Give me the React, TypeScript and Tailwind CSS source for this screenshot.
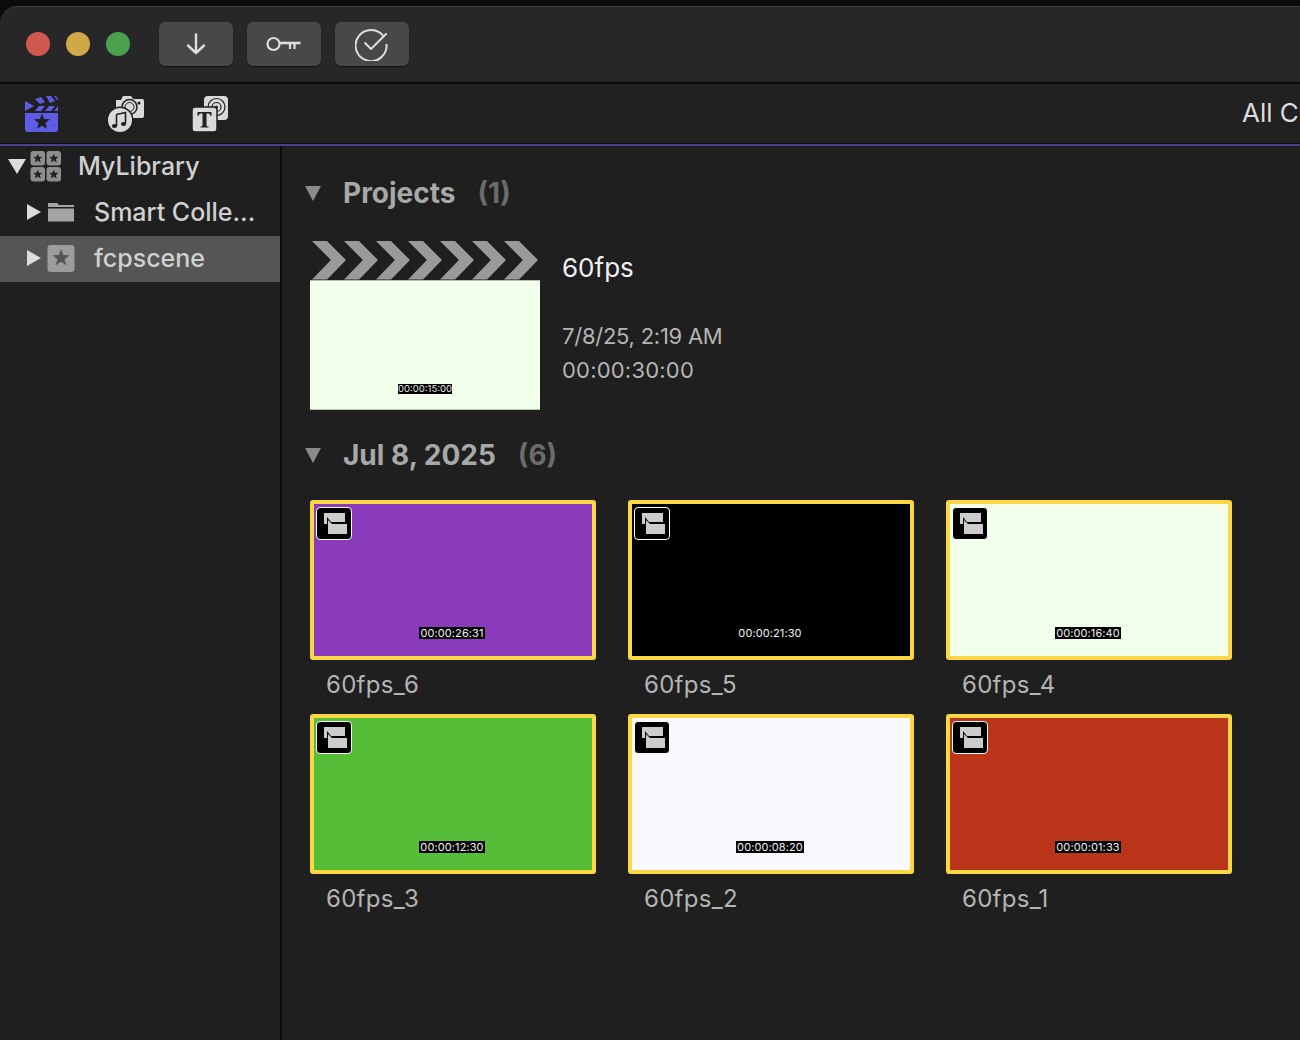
import React from 'react';

const font = { fontFamily: 'Inter, "Liberation Sans", sans-serif' };

const clips = [
  { name: '60fps_6', color: 'bg-[#8a3bbb]', time: '00:00:26:31' },
  { name: '60fps_5', color: 'bg-black', time: '00:00:21:30' },
  { name: '60fps_4', color: 'bg-[#f2ffea]', time: '00:00:16:40' },
  { name: '60fps_3', color: 'bg-[#55bd37]', time: '00:00:12:30' },
  { name: '60fps_2', color: 'bg-[#f9faff]', time: '00:00:08:20' },
  { name: '60fps_1', color: 'bg-[#bb351a]', time: '00:00:01:33' },
];

const TriRight = () => (
  <svg width="16" height="18" viewBox="0 0 16 18" className="shrink-0"><path d="M1 1 L15 9 L1 17 Z" fill="#dcdcdc" /></svg>
);

const TriDown = ({ w = 18, h = 15, c = '#dcdcdc' }: { w?: number; h?: number; c?: string }) => (
  <svg width={w} height={h} viewBox="0 0 18 15" preserveAspectRatio="none" className="shrink-0"><path d="M0 0 H18 L9 15 Z" fill={c} /></svg>
);

const Star = ({ cx, cy, r, fill }: { cx: number; cy: number; r: number; fill: string }) => {
  const pts: string[] = [];
  for (let i = 0; i < 10; i++) {
    const rad = i % 2 === 0 ? r : r * 0.42;
    const a = -Math.PI / 2 + (i * Math.PI) / 5;
    pts.push(`${cx + rad * Math.cos(a)},${cy + rad * Math.sin(a)}`);
  }
  return <polygon points={pts.join(' ')} fill={fill} />;
};

const ClapIcon = () => (
  <svg width="34" height="36" viewBox="0 0 34 36">
    <path d="M0 17 H33 V33 a3 3 0 0 1 -3 3 H3 a3 3 0 0 1 -3 -3 Z" fill="#5e5ce6" />
    <path d="M0 5 L9 10 L0 15 Z" fill="#5e5ce6" />
    <path d="M10 15 L14 10 H20 L16 15 Z M20 15 L24 10 H30 L26 15 Z M29 15 L33 10 V15 Z" fill="#5e5ce6" />
    <path d="M10 3 L16 1 L20 6 L15 8 Z M21 0 L26 0 L30 5 L25 7 Z M29 0 H31 L33 3 V5 Z" fill="#5e5ce6" />
    <Star cx={17} cy={26} r={8.500} fill="#1f1f1f" />
  </svg>
);

const MusicPhotoIcon = () => (
  <svg width="37" height="36" viewBox="0 0 37 36">
    <path d="M8 4 H13 L15 0 H23 L25 3 H34 a2 2 0 0 1 2 2 V20 a2 2 0 0 1 -2 2 H8 Z" fill="#dadada" />
    <circle cx="31" cy="7" r="1.500" fill="#1f1f1f" />
    <circle cx="21.500" cy="11" r="7.500" fill="#dadada" stroke="#1f1f1f" strokeWidth="1.500" />
    <circle cx="21.500" cy="11" r="4.500" fill="none" stroke="#1f1f1f" strokeWidth="1" />
    <circle cx="12" cy="24" r="13.500" fill="#1f1f1f" />
    <circle cx="12" cy="24" r="12" fill="#dadada" />
    <path d="M8.500 18.500 L17.500 16.500 V27.500" fill="none" stroke="#1f1f1f" strokeWidth="1.600" />
    <path d="M8.500 18.500 V30" fill="none" stroke="#1f1f1f" strokeWidth="1.600" />
    <ellipse cx="6.500" cy="30" rx="2.600" ry="2" fill="#1f1f1f" />
    <ellipse cx="15.500" cy="28" rx="2.600" ry="2" fill="#1f1f1f" />
  </svg>
);

const TitleIcon = () => (
  <svg width="38" height="36" viewBox="0 0 38 36">
    <rect x="12" y="0" width="24" height="24" rx="4" fill="#dadada" />
    <circle cx="24.500" cy="11" r="8.500" fill="none" stroke="#1f1f1f" strokeWidth="1.200" />
    <circle cx="24.500" cy="11" r="4.500" fill="none" stroke="#1f1f1f" strokeWidth="1.200" />
    <circle cx="24.500" cy="11" r="1.500" fill="#1f1f1f" />
    <rect x="0" y="11" width="25" height="25" rx="3" fill="#dadada" stroke="#1f1f1f" strokeWidth="1.500" />
    <path d="M5.500 16 H19.500 V20 H18.500 C18.100 18 17.500 17.600 14.500 17.600 V29 C14.500 30.200 15.100 30.500 16.500 30.500 V31.500 H8.500 V30.500 C9.900 30.500 10.500 30.200 10.500 29 V17.600 C7.500 17.600 6.900 18 6.500 20 H5.500 Z" fill="#222" />
  </svg>
);

const LibraryIcon = () => (
  <svg width="32" height="32" viewBox="0 0 32 32">
    {[[0, 1], [16, 1], [0, 17], [16, 17]].map(([x, y]) => (
      <g key={`${x}-${y}`}>
        <rect x={x + 0.5} y={y} width="14.500" height="14.500" rx="3" fill="#8e8e8e" />
        <Star cx={x + 7.8} cy={y + 7.4} r={5} fill="#1f1f1f" />
      </g>
    ))}
  </svg>
);

const FolderIcon = () => (
  <svg width="28" height="20" viewBox="0 0 28 20"><path d="M1 1 H10 L12 3 H27 V5 H1 Z M1 6.500 H27 V19.500 H1 Z" fill="#a5a5a5" /></svg>
);

const EventIcon = () => (
  <svg width="28" height="28" viewBox="0 0 28 28">
    <rect x="0.500" y="1" width="27" height="27" rx="3" fill="#9c9c9c" />
    <Star cx={14} cy={14} r={9} fill="#555" />
  </svg>
);

const ClipBadge = () => (
  <div className="absolute left-[2px] top-[3px] flex h-[33px] w-[36px] items-center justify-center rounded-[4px] border border-white bg-black">
    <svg width="26" height="23" viewBox="0 0 26 23">
      <path d="M3 1 H24 V10 H10 L6 5 V12 H3 Z M7 8 L11 12 H26 V22 H7 Z" fill="#cccccc" />
    </svg>
  </div>
);

const Timecode = ({ time }: { time: string }) => (
  <span className="mr-[2px] bg-black px-px text-[11px] leading-[12px] tracking-[0.1px] text-[#f2f2f2]">{time}</span>
);

const ClipCard = ({ name, color, time }: { name: string; color: string; time: string }) => (
  <div>
    <div className={`relative flex h-[160px] w-[286px] items-end justify-center rounded-[3px] border-4 border-[#fbd745] pb-[17px] ${color}`}>
      <ClipBadge />
      <Timecode time={time} />
    </div>
    <div className="flex h-[54px] items-start pl-[16px] pt-[10px] text-[24px] leading-[29px] tracking-[0.3px] text-[#b4b4b4]">{name}</div>
  </div>
);

const Sprockets = () => (
  <svg width="230" height="39" viewBox="0 0 230 39" className="block">
    {[0, 32, 64, 96, 128, 160, 192].map((x) => (
      <path key={x} d="M2 0 H17 L36 19 L17 38.500 H2 L21 19 Z" fill="#9a9a9a" transform={`translate(${x} 0)`} />
    ))}
  </svg>
);

const SectionHeader = ({ title, count }: { title: string; count: string }) => (
  <div className="flex items-center">
    <TriDown w={16} h={15} c="#8a8a8a" />
    <span className="ml-[22px] text-[28px] font-bold leading-[34px] text-[#a8a8a8]">{title}</span>
    <span className="ml-[22px] text-[28px] font-bold leading-[34px] text-[#6b6b6b]">{count}</span>
  </div>
);

export default function App() {
  return (
    <div className="flex h-[1040px] w-[1300px] flex-col overflow-hidden bg-[#0c0c0c] pt-[6px]" style={font}>
      <div className="flex h-[76px] items-center rounded-tl-[18px] border-t border-[#3c3c3c] bg-[#272727] pb-[2px] pl-[26px]">
        <div className="flex gap-[16px]">
          <div className="h-[24px] w-[24px] rounded-full bg-[#d1594f]" />
          <div className="h-[24px] w-[24px] rounded-full bg-[#cfa945]" />
          <div className="h-[24px] w-[24px] rounded-full bg-[#4da04e]" />
        </div>
        <div className="ml-[29px] flex gap-[14px]">
          <div className="flex h-[44px] w-[74px] items-center justify-center rounded-[6px] bg-[#484848] shadow-[0_1px_1px_rgba(0,0,0,0.5)]">
            <svg width="20" height="22" viewBox="0 0 20 22" fill="none" stroke="#dedede" strokeWidth="2.400" strokeLinecap="round" strokeLinejoin="round">
              <path d="M10 1.500 V20 M2 12.500 L10 20 L18 12.500" />
            </svg>
          </div>
          <div className="flex h-[44px] w-[74px] items-center justify-center rounded-[6px] bg-[#484848] shadow-[0_1px_1px_rgba(0,0,0,0.5)]">
            <svg width="36" height="18" viewBox="0 0 36 18" fill="none" stroke="#dedede">
              <circle cx="7.500" cy="9" r="6" strokeWidth="2.200" />
              <path d="M13.500 8 H34.500" strokeWidth="2.600" />
              <path d="M24 8 V14 M28.500 8 V14" strokeWidth="2.200" />
            </svg>
          </div>
          <div className="flex h-[44px] w-[74px] items-center justify-center rounded-[6px] bg-[#484848] shadow-[0_1px_1px_rgba(0,0,0,0.5)]">
            <svg width="34" height="34" viewBox="0 0 34 34" fill="none" stroke="#dedede" strokeWidth="2">
              <path d="M29 10 A15.500 15.500 0 1 0 31.500 17" />
              <path d="M10 16 L16 22 L31 7" strokeLinecap="round" strokeLinejoin="round" />
            </svg>
          </div>
        </div>
      </div>

      <div className="h-[2px] bg-[#0a0a0a]" />

      <div className="flex h-[59px] items-center justify-between bg-[#212121] pb-[2px] pl-[25px]">
        <div className="flex items-center pt-[2px]">
          <ClapIcon />
          <span className="ml-[49px] flex"><MusicPhotoIcon /></span>
          <span className="ml-[47px] flex"><TitleIcon /></span>
        </div>
        <span className="w-[58px] overflow-hidden whitespace-nowrap text-[26px] leading-[32px] text-[#dcdcdc]">All Clips</span>
      </div>

      <div className="h-[1px] bg-[#0c0c0c]" />
      <div className="h-[2px] bg-[#46438f]" />

      <div className="flex min-h-0 flex-1 bg-[#1f1f1f]">
        <aside className="w-[280px] shrink-0 text-[25px] font-[450] leading-[32px] text-[#d0d0d0]">
          <div className="flex h-[44px] items-center pb-[4px] pl-[8px]">
            <TriDown />
            <span className="ml-[4px] flex"><LibraryIcon /></span>
            <span className="ml-[16px]">MyLibrary</span>
          </div>
          <div className="flex h-[46px] items-center pb-[2px] pl-[26px]">
            <TriRight />
            <span className="ml-[5px] flex"><FolderIcon /></span>
            <span className="ml-[19px]">Smart Colle...</span>
          </div>
          <div className="flex h-[46px] items-center bg-[#555555] pb-[2px] pl-[26px]">
            <TriRight />
            <span className="ml-[5px] flex"><EventIcon /></span>
            <span className="ml-[19px]">fcpscene</span>
          </div>
        </aside>
        <div className="w-[2px] shrink-0 bg-[#0c0c0c]" />

        <main className="min-w-0 flex-1 pl-[22px] pt-[30px]">
          <div className="pl-[1px]"><SectionHeader title="Projects" count="(1)" /></div>

          <div className="mt-[31px] flex pl-[6px]">
            <div className="w-[230px]">
              <Sprockets />
              <div className="flex h-[130px] items-end justify-center border-y border-[#b9c2ae] bg-[#f2ffea] pb-[15px]">
                <span className="bg-black text-[9.500px] leading-[10px] text-[#e8e8e8]">00:00:15:00</span>
              </div>
            </div>
            <div className="ml-[22px] pt-[11px]">
              <div className="text-[26px] leading-[32px] text-[#f0f0f0]">60fps</div>
              <div className="mt-[36px] text-[22px] leading-[32px] tracking-[-0.25px] text-[#b4b4b4]">7/8/25, 2:19 AM</div>
              <div className="mt-[2px] text-[22px] leading-[32px] tracking-[0.2px] text-[#b4b4b4]">00:00:30:00</div>
            </div>
          </div>

          <div className="mt-[28px] pl-[1px]"><SectionHeader title="Jul 8, 2025" count="(6)" /></div>

          <div className="mt-[28px] grid grid-cols-[286px_286px_286px] gap-x-[32px] pl-[6px]">
            {clips.map((c) => (
              <ClipCard key={c.name} name={c.name} color={c.color} time={c.time} />
            ))}
          </div>
        </main>
      </div>
    </div>
  );
}
